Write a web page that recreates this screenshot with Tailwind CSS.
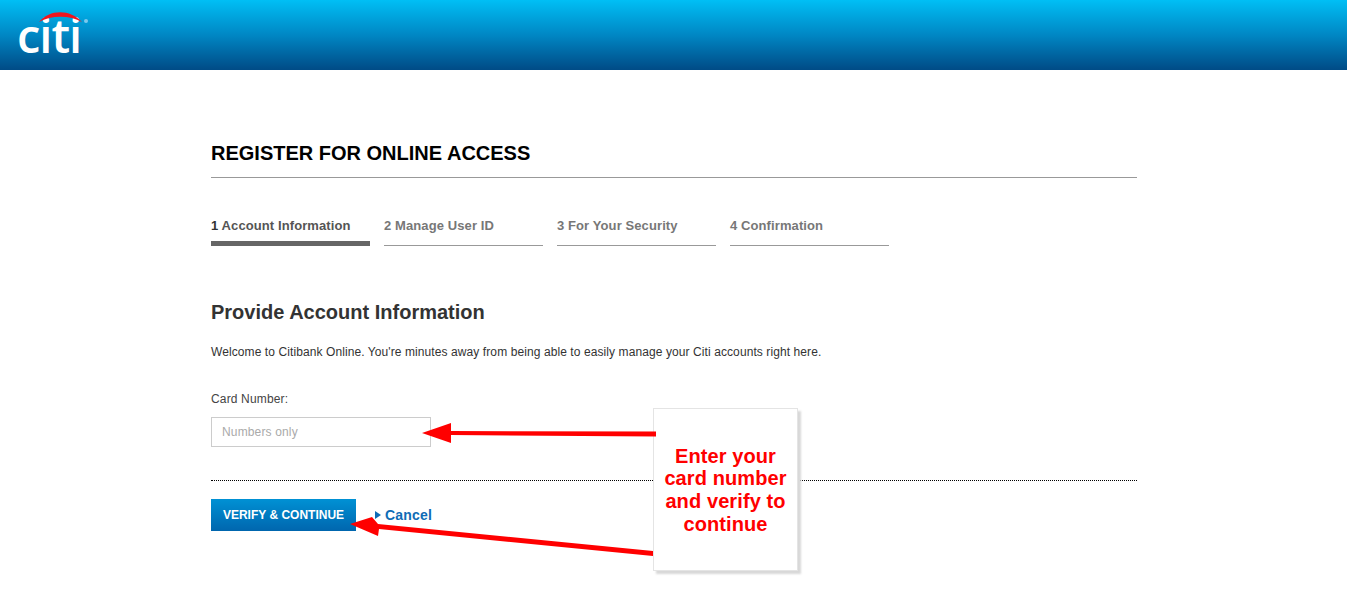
<!DOCTYPE html>
<html lang="en">
<head>
  <meta charset="UTF-8">
  <title>Register for Online Access</title>
  <script src="https://cdn.jsdelivr.net/npm/@tailwindcss/browser@4"></script>
</head>
<body class="relative h-[606px] overflow-hidden bg-white font-['Liberation_Sans',Arial,sans-serif]">
  <!-- Header -->
  <header class="relative h-[70px] bg-gradient-to-b from-[#00bff5] via-[#0087c4] to-[#004b86]">
    <div class="absolute left-[18px] top-[11px] h-[42px] w-[72px]">
      <span class="absolute left-[-1px] top-[1px] font-['Open_Sans',sans-serif] text-[47px] leading-[47px] font-semibold tracking-[-1px] text-white">citi</span>
      <svg class="absolute left-0 top-0" width="72" height="20" viewBox="0 0 72 20">
        <path d="M21 11 C32 -2 52 -2 64 11 C52 4 33 4 21 11 Z" fill="#f0141e"/>
        <circle cx="68" cy="10" r="2" fill="#7cc8ec"/>
      </svg>
    </div>
  </header>

  <!-- Main -->
  <main class="ml-[211px] w-[926px]">
    <h1 class="mt-[70px] h-[37px] text-[20px] leading-[26px] font-bold text-black">REGISTER FOR ONLINE ACCESS</h1>
    <div class="h-px bg-[#999999]"></div>

    <!-- Steps -->
    <ol class="mt-[37px] flex gap-[14px] text-[13px] leading-[22px] font-bold tracking-[0.1px] text-[#777777]">
      <li class="h-[31px] w-[159px] border-b-[5px] border-[#666666] text-[#555555]"><span class="text-[#333333]">1</span> Account Information</li>
      <li class="h-[31px] w-[159px] border-b border-[#999999]">2 Manage User ID</li>
      <li class="h-[31px] w-[159px] border-b border-[#999999]">3 For Your Security</li>
      <li class="h-[31px] w-[159px] border-b border-[#999999]">4 Confirmation</li>
    </ol>

    <h2 class="mt-[53px] text-[20px] leading-[26px] font-bold text-[#333333]">Provide Account Information</h2>
    <p class="mt-[19px] text-[12px] leading-[16px] tracking-[0.09px] text-[#333333]">Welcome to Citibank Online. You're minutes away from being able to easily manage your Citi accounts right here.</p>

    <label class="mt-[31px] block text-[12px] leading-[16px] tracking-[0.15px] text-[#444444]">Card Number:</label>
    <input type="text" placeholder="Numbers only" class="mt-[10px] block h-[30px] w-[220px] border border-[#cccccc] px-[10px] text-[12px] tracking-[0.15px] placeholder:text-[#aaaaaa]">

    <div class="mt-[33px] border-t border-dotted border-black"></div>

    <div class="mt-[18px] flex items-center">
      <button class="h-[32px] w-[145px] bg-gradient-to-b from-[#0091d4] to-[#0066ae] text-[12px] font-bold text-white">VERIFY &amp; CONTINUE</button>
      <a class="ml-[19px] flex items-center gap-[4px] text-[14px] font-bold tracking-[0.2px] text-[#0f6cb6]">
        <span class="h-0 w-0 border-y-[4px] border-l-[6px] border-y-transparent border-l-[#0f6cb6]"></span>
        Cancel
      </a>
    </div>
  </main>

  <!-- Callout -->
  <div class="absolute left-[653px] top-[408px] flex h-[163px] w-[145px] items-center justify-center border border-[#e4e4e4] bg-white pt-[1px] text-center text-[20px] leading-[22.7px] font-bold tracking-[0.1px] text-[#ff0000] shadow-[3px_3px_2px_#d8d8d8]">
    <p>Enter your<br>card number<br>and verify to<br>continue</p>
  </div>

  <!-- Annotation arrows -->
  <svg class="absolute left-0 top-0" width="1347" height="606" viewBox="0 0 1347 606">
    <polygon points="656,431.5 451,431 451,423 422,433 451,443 451,435 656,436.5" fill="#ff0000"/>
    <polygon points="653,551 378,524 372,517 350,524 378,536 379,529 653,556" fill="#ff0000"/>
  </svg>
</body>
</html>
